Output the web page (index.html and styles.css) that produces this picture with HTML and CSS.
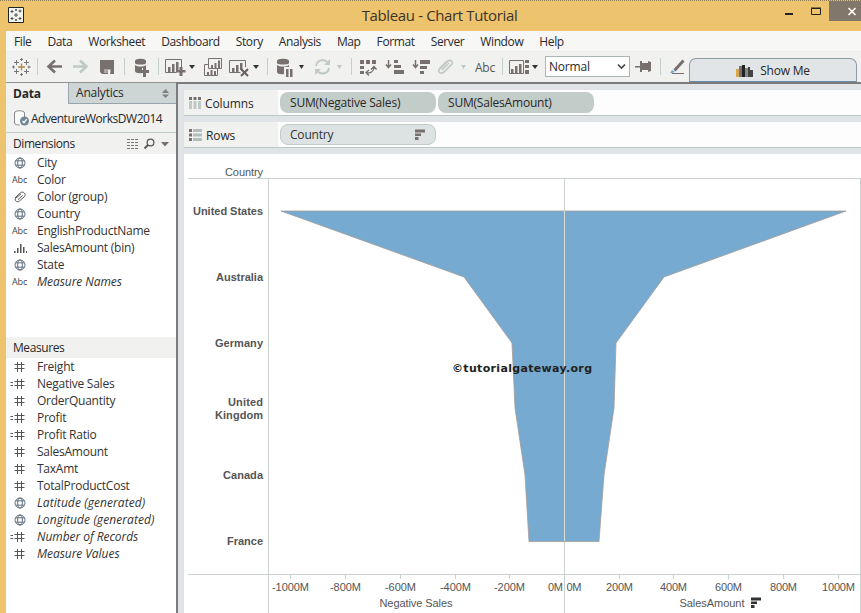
FILE: index.html
```html
<!DOCTYPE html>
<html lang="en">
<head>
<meta charset="utf-8">
<title>Tableau - Chart Tutorial</title>
<link rel="stylesheet" href="styles.css">
</head>
<body>
<svg class="defs" width="0" height="0">
  <symbol id="globe" viewBox="0 0 12 12"><g fill="none" stroke="#5f6f7e"><circle cx="6" cy="6" r="5"/><ellipse cx="6" cy="6" rx="2.3" ry="5"/><path d="M1.8 3.8h8.4M1.8 8.2h8.4"/></g></symbol>
  <symbol id="hash" viewBox="0 0 12 12"><path d="M3.500 1v10M7.500 1v10M.5 3.500h10M.5 7.500h10" fill="none" stroke="#555"/></symbol>
  <symbol id="calc" viewBox="0 0 16 12"><path d="M7.500 1v10M11.500 1v10M4.500 3.500h10M4.500 7.500h10M.5 4.500h2.500M.5 7.500h2.500" fill="none" stroke="#555"/></symbol>
  <symbol id="clip" viewBox="0 0 14 12"><path d="M2 7 7.500 1.800c2.500-2 6 1 4 3.700L6.500 10c-2.300 2-5.500-.3-3.800-2.800L8 2.800M5 8.700l4.500-4.200" fill="none" stroke="currentColor"/></symbol>
  <symbol id="sort" viewBox="0 0 12 12"><path d="M1 .5h10v3H1zM1 4.500h6v2.500H1zM1 8h3.500v3H1z" fill="currentColor"/></symbol>
</svg>
<header class="titlebar">
  <svg class="appicon" width="16" height="16"><path d="M.5.5h15v15H.5z" fill="#f2f2ee" stroke="#222"/><path d="M8 6v4M6 8h4M4 3v3M2.500 4.500h3M12 2.500v3M10.500 4h3M4 10v3M2.500 11.500h3M12 10v3M10.500 11.500h3M8 2v2M7 3h2M8 12v2M7 13h2" stroke="#333" stroke-width=".8" fill="none"/></svg>
  <h1>Tableau - Chart Tutorial</h1>
  <svg class="winbtns" width="81" height="31" viewBox="780 0 81 31"><path d="M785 14h8" stroke="#222" stroke-width="2"/><path d="M811.500 8.500h9v6h-9zM811 8h10" fill="none" stroke="#222"/><path d="M829 1h32v20h-32z" fill="#82776b"/><path d="m848.500 8 7 7m0-7-7 7" stroke="#fff" stroke-width="1.600"/></svg>
</header>
<div class="frame">
  <nav class="menu"><span>File</span><span>Data</span><span>Worksheet</span><span>Dashboard</span><span>Story</span><span>Analysis</span><span>Map</span><span>Format</span><span>Server</span><span>Window</span><span>Help</span></nav>
  <div class="toolbar">
    <svg width="30" height="32" viewBox="6 51 30 32"><g fill="none" stroke="#777"><path d="M21.500 63.500v7M18 67h7" stroke="#b08a45" stroke-width="1.300"/><path d="M16.500 60v5M14 62.500h5M26.500 60v5M24 62.500h5M16.500 69v5M14 71.500h5M26.500 69v5M24 71.500h5M21.500 58v3M20 59.500h3M21.500 73v3M20 74.500h3M13.500 65.500v3M12 67h3M29 65.500v3M27.500 67h3"/></g></svg>
    <i class="sep w3"></i>
    <svg width="29" height="32" viewBox="39 51 29 32"><path d="M62 66.500H49m6-6-6.500 6 6.500 6" fill="none" stroke="#77706f" stroke-width="2.600"/></svg>
    <svg width="26" height="32" viewBox="68 51 26 32"><path d="M73 66.500h13m-6-6 6.500 6-6.500 6" fill="none" stroke="#bfc9c6" stroke-width="2.600"/></svg>
    <svg width="28" height="32" viewBox="94 51 28 32"><path d="M100 60h14v14h-12l-2-2z" fill="#77706f"/><path d="M104 69h7v4h-7z" fill="#aaa5a3"/><path d="M108 70h2v4h-2z" fill="#f1f1f0"/></svg>
    <i class="sep w4"></i>
    <svg width="30" height="32" viewBox="126 51 30 32"><g fill="#77706f"><path d="M135 61c0-3 11-3 11 0v2c0 2-11 2-11 0zM135 65c3 2 8 2 11 0v3h-4v5c-3 .5-7 0-7-2z"/><path d="M143 67h3v3h3v3h-3v4h-3v-4h-3v-3h3z"/></g></svg>
    <i class="sep w4"></i>
    <svg width="38" height="32" viewBox="160 51 38 32"><path d="M181.500 68v-8.500h-16v13h11" fill="none" stroke="#77706f"/><path d="M168 67h2.500v5H168zM172 64h2.500v8H172zM176 62h2.500v8H176zM179.500 67h3v3h3v2.500h-3V76h-3v-3.500H176V70h3.500z" fill="#77706f"/><path d="M189 65h6l-3 4z" fill="#333"/></svg>
    <svg width="27" height="32" viewBox="198 51 27 32"><path d="M208.500 58.500h13v10h-13zM208 64.500h-3.500v11h13V69" fill="none" stroke="#77706f"/><path d="M211 65h2v3h-2zM214.500 63h2v5h-2zM218 60.500h2V68h-2zM207 72h2v3h-2zM210.500 70h2v5h-2zM214 71h2v4h-2z" fill="#77706f"/></svg>
    <svg width="39" height="32" viewBox="225 51 39 32"><path d="M245.500 67v-6.500h-16v12h11" fill="none" stroke="#77706f"/><path d="M232 68h2.500v4H232zM236 65h2.500v7H236zM240 63h2.500v7H240z" fill="#77706f"/><path d="m241 69 7 7m0-7-7 7" stroke="#665f5e" stroke-width="2"/><path d="M253 65h6l-3 4z" fill="#333"/></svg>
    <i class="sep w6"></i>
    <svg width="40" height="32" viewBox="270 51 40 32"><path d="M277 61c0-3 12-3 12 0v2c0 2-12 2-12 0zM277 65c3 2 9 2 12 0v2h-5v7c-3 .5-7 0-7-2zM286 69h2.500v8H286zM290 69h2.500v8H290z" fill="#77706f"/><path d="M299 65h5l-2.500 4z" fill="#333"/></svg>
    <svg width="38" height="32" viewBox="310 51 38 32"><path d="M316 66c1-6 8-8 12-3M329 68c-1 6-8 7-12 3" fill="none" stroke="#bfc9c6" stroke-width="2"/><path d="M330 59v6h-6zM315 75v-6h6z" fill="#bfc9c6"/><path d="M337 65h5l-2.500 4z" fill="#bfc9c6"/></svg>
    <i class="sep w6"></i>
    <svg width="27" height="32" viewBox="354 51 27 32"><path d="M360 60h4v4h-4zM366 60h4v4h-4zM372 60h4v4h-4zM360 66h4v3h-4zM360 71h4v3h-4z" fill="#77706f"/><path d="M366.500 72.500c4 1.500 7-1 7.500-5m-3 2 3-3 2.500 3M369 70l-3 2.500 3 3" fill="none" stroke="#77706f" stroke-width="1.300"/></svg>
    <svg width="27" height="32" viewBox="381 51 27 32"><path d="M388.500 60v7m-2.500-2.500 2.500 3 2.500-3" fill="none" stroke="#77706f" stroke-width="1.500"/><path d="M394 60h4v3h-4zM394 65h7v3h-7zM394 70h10v4h-10z" fill="#77706f"/></svg>
    <svg width="25" height="32" viewBox="408 51 25 32"><path d="M415.500 60v7m-2.500-2.500 2.500 3 2.500-3" fill="none" stroke="#77706f" stroke-width="1.500"/><path d="M420 60h10v4h-10zM420 66h7v3h-7zM420 71h4v3h-4z" fill="#77706f"/></svg>
    <svg width="37" height="32" viewBox="433 51 37 32"><path d="m440 69 8-8c3-2 5 1 4 3l-8 8c-4 3-7-1-4-4l7-7m-5 9 7-7" fill="none" stroke="#bfc9c6" stroke-width="1.700"/><path d="M461 65h5l-2.500 4z" fill="#bfc9c6"/></svg>
    <span class="abc">Abc</span>
    <i class="sep w4"></i>
    <svg width="41" height="32" viewBox="504 51 41 32"><path d="M509.500 60.500h14v13h-14z" fill="none" stroke="#77706f"/><path d="M511 69h2.500v4H511zM515 66h2.500v7H515zM519 64h2.500v9H519zM525 60h4v3h-4zM525 65h4v3h-4zM525 70h4v4h-4z" fill="#77706f"/><path d="M532 65h6l-3 4z" fill="#333"/></svg>
    <div class="select"><span>Normal</span><svg width="9" height="7"><path d="m1 1.500 3.500 3.500L8 1.500" fill="none" stroke="#444" stroke-width="1.600"/></svg></div>
    <svg width="27" height="32" viewBox="630 51 27 32"><path d="M635 66h6v1.500h-6zM640 61h2v11h-2zM642 63h7v7h-7zM648 61l3 1v9l-3 1z" fill="#77706f"/></svg>
    <i class="sep w7"></i>
    <svg width="25" height="32" viewBox="664 51 25 32"><path d="m683.500 60.500-9 10" stroke="#77706f" stroke-width="3"/><path d="m672 70 3 2-5 1.500z" fill="#6ca7d2"/><path d="M672 73.500h12" stroke="#77706f"/></svg>
    <div class="showme"><svg width="17" height="12"><path d="M0 4h3v8H0z" fill="#d9a650"/><path d="M3 1h3v11H3z" fill="#77706f"/><path d="M6 0h3v12H6z" fill="#222"/><path d="M9 3h3v9H9z" fill="#888"/><path d="M12 2h2v10h-2zM14 5h3v7h-3z" fill="#444"/></svg><span>Show Me</span></div>
  </div>
  <div class="body">
    <aside>
      <div class="tabs"><b>Data</b><div><span>Analytics</span><svg width="7" height="9"><path d="m0 4 3.500-4L7 4zM0 5.500h7L3.500 9z" fill="#7c8184"/></svg></div></div>
      <div class="source"><svg width="17" height="17"><path d="M11.500 7V3c0-3-10-3-10 0v10c0 1.500 3 2 5 2" fill="#fafafa" stroke="#888"/><circle cx="11.500" cy="11" r="4.500" fill="#718797"/><path d="m9.500 11 1.500 1.700 2.700-3.500" fill="none" stroke="#fff" stroke-width="1.300"/></svg><span>AdventureWorksDW2014</span></div>
      <div class="head"><span>Dimensions</span>
        <svg width="42" height="12"><path d="M0 1.500h3M0 4.500h3M0 7.500h3M0 10.500h3M4 1.500h8M4 4.500h8M4 7.500h8M4 10.500h8" stroke="#777" stroke-dasharray="3 1"/><circle cx="23.500" cy="4.500" r="3.400" fill="none" stroke="#555" stroke-width="1.200"/><path d="m21 7-3.500 3.500" stroke="#555" stroke-width="1.800"/><path d="M34 4h8l-4 4.500z" fill="#77706f"/></svg></div>
      <ul class="dims">
        <li><svg class="g"><use href="#globe"/></svg>City</li>
        <li><small>Abc</small>Color</li>
        <li><svg class="p"><use href="#clip"/></svg>Color (group)</li>
        <li><svg class="g"><use href="#globe"/></svg>Country</li>
        <li><small>Abc</small>EnglishProductName</li>
        <li><svg class="p" viewBox="0 0 14 12"><path d="M1 9h1.500v2H1zM4 6h1.500v5H4zM7 2h1.500v9H7zM10 5h1.500v6H10zM13 9h1v2h-1z" fill="#555"/></svg>SalesAmount (bin)</li>
        <li><svg class="g"><use href="#globe"/></svg>State</li>
        <li class="it"><small>Abc</small>Measure Names</li>
      </ul>
      <div class="head"><span>Measures</span></div>
      <ul>
        <li><svg class="g"><use href="#hash"/></svg>Freight</li>
        <li><svg class="c"><use href="#calc"/></svg>Negative Sales</li>
        <li><svg class="g"><use href="#hash"/></svg>OrderQuantity</li>
        <li><svg class="c"><use href="#calc"/></svg>Profit</li>
        <li><svg class="c"><use href="#calc"/></svg>Profit Ratio</li>
        <li><svg class="g"><use href="#hash"/></svg>SalesAmount</li>
        <li><svg class="g"><use href="#hash"/></svg>TaxAmt</li>
        <li><svg class="g"><use href="#hash"/></svg>TotalProductCost</li>
        <li class="it wide"><svg class="g"><use href="#globe"/></svg>Latitude (generated)</li>
        <li class="it wide"><svg class="g"><use href="#globe"/></svg>Longitude (generated)</li>
        <li class="it"><svg class="c"><use href="#calc"/></svg>Number of Records</li>
        <li class="it"><svg class="g"><use href="#hash"/></svg>Measure Values</li>
      </ul>
    </aside>
    <main>
      <section class="shelf"><div class="label"><svg width="12" height="12"><path d="M0 0h3v3H0zM4.500 0h3v3h-3zM9 0h3v3H9z" fill="#77706f"/><path d="M0 4h3v8H0zM4.500 4h3v8h-3zM9 4h3v8H9z" fill="#bfc9c6"/></svg>Columns</div><div class="pill">SUM(Negative Sales)</div><div class="pill">SUM(SalesAmount)</div></section>
      <section class="shelf"><div class="label"><svg width="13" height="12"><path d="M0 0h3v3H0zM0 4.500h3v3H0zM0 9h3v3H0z" fill="#77706f"/><path d="M4 0h9v3H4zM4 4.500h9v3H4zM4 9h9v3H4z" fill="#b3beba"/></svg>Rows</div><div class="pill light">Country<svg width="12" height="12"><use href="#sort"/></svg></div></section>
      <svg class="chart" width="677" height="459" viewBox="184 154 677 459">
        <path d="M188 178.500h673M188 574.500h673M268.500 178v435M564.500 178v435M860.500 178v435" stroke="#cbd1cf" fill="none"/>
        <path d="M290.500 575v4M345.500 575v4M400.500 575v4M455.500 575v4M509.500 575v4M619.500 575v4M673.500 575v4M728.500 575v4M783.500 575v4M838.500 575v4" stroke="#cbd1cf"/>
        <path d="M281 211H846L664 277 616 343 614 408 604 475 599 541.500H529L525 475 515 408 512 343 464 277Z" fill="#76aad0" stroke="#a49c98" stroke-width=".8"/>
        <path d="M564.500 211v330" stroke="#d9dcd3"/>
        <g class="rowlabels">
          <text class="title" x="263" y="176" textLength="38">Country</text>
          <text x="263" y="215" textLength="70">United States</text>
          <text x="263" y="281" textLength="47">Australia</text>
          <text x="263" y="347" textLength="48">Germany</text>
          <text x="263" y="406" textLength="35">United</text>
          <text x="263" y="419" textLength="48">Kingdom</text>
          <text x="263" y="479" textLength="40">Canada</text>
          <text x="263" y="545" textLength="36">France</text>
        </g>
        <g class="axis">
          <text x="290.500" y="591" textLength="37">-1000M</text><text x="345.500" y="591" textLength="31">-800M</text><text x="400.500" y="591" textLength="31">-600M</text><text x="455.500" y="591" textLength="31">-400M</text><text x="509.500" y="591" textLength="31">-200M</text>
          <text x="555.500" y="591" textLength="15">0M</text><text x="574" y="591" textLength="15">0M</text>
          <text x="619.500" y="591" textLength="27">200M</text><text x="673.500" y="591" textLength="27">400M</text><text x="728.500" y="591" textLength="27">600M</text><text x="783.500" y="591" textLength="27">800M</text><text x="838.500" y="591" textLength="33">1000M</text>
          <text x="416" y="607" textLength="73">Negative Sales</text><text x="712" y="607" textLength="65">SalesAmount</text>
        </g>
        <use href="#sort" x="750" y="597" width="12" height="12" color="#333"/>
        <text class="mark" x="452" y="372" textLength="140">©tutorialgateway.org</text>
      </svg>
    </main>
  </div>
</div>
</body>
</html>
```
FILE: styles.css
```css
* { box-sizing: border-box; }
body { margin: 0; width: 861px; height: 613px; overflow: hidden; background: #edc46d; font: 12px "Open Sans", "Noto Sans", sans-serif; color: #282828; letter-spacing: -.2px; }
svg { flex: none; display: block; }
.defs { position: absolute; }
.titlebar { height: 31px; display: flex; align-items: flex-start; border-top: 1px dotted #8f7e59; padding-left: 8px; }
.appicon { margin-top: 6px; }
h1 { flex: 1; margin: 3px 0 0; padding-left: 75px; text-align: center; font-size: 15px; line-height: 22px; font-weight: 400; color: #3c3329; letter-spacing: -.36px; }
.winbtns { margin-top: -1px; }
.frame { margin-left: 6px; height: 582px; background: #f1f1f0; display: flex; flex-direction: column; }
.menu { height: 20px; display: flex; gap: 16px; padding: 2px 0 0 8px; line-height: 18px; background: #f7f7f6; letter-spacing: -.38px; }
.toolbar { height: 31px; display: flex; border-top: 1px solid #ececeb; }
.toolbar > svg { margin-top: -1px; }
.sep { flex: none; height: 17px; margin-top: 6px; background: linear-gradient(#c5cfcb, #c5cfcb) center / 1px 100% no-repeat; }
.w3 { width: 3px; } .w4 { width: 4px; } .w6 { width: 6px; } .w7 { width: 7px; }
.abc { width: 30px; text-align: center; line-height: 31px; color: #555; }
.select { width: 85px; height: 21px; margin-top: 4px; border: 1px solid #a9b8b5; background: #fff; display: flex; align-items: center; justify-content: space-between; padding: 0 3px; }
.showme { width: 168px; height: 24px; margin-top: 6px; border: 1px solid #8c9ba3; border-bottom-color: #678ca7; border-radius: 7px 7px 0 0; background: #e1e5e7; display: flex; align-items: center; justify-content: center; gap: 7px; padding-top: 1px; }
.body { flex: 1; display: flex; min-height: 0; }
aside { width: 170px; background: #fff; border-top: 1px solid #929292; display: flex; flex-direction: column; }
.tabs { height: 21px; display: flex; background: #f1f1f0; line-height: 20px; }
.tabs b { width: 62px; padding-left: 7px; line-height: 21px; }
.tabs div { flex: 1; display: flex; justify-content: space-between; align-items: center; padding: 0 7px; background: #cdd6d5; border-left: 1px solid #98a5ad; border-bottom: 1px solid #98a5ad; }
.source { height: 29px; display: flex; align-items: center; padding-left: 7px; background: #f1f1f0; border-bottom: 1px solid #c2ccc8; letter-spacing: -.48px; }
.source span { margin-left: 1px; }
.head { height: 21px; flex: none; display: flex; align-items: center; justify-content: space-between; padding: 0 7px; background: #f1f1ef; letter-spacing: -.42px; }
ul { list-style: none; margin: 0; padding: 0; }
.dims { height: 183px; }
li { height: 17px; display: flex; align-items: center; line-height: 17px; color: #333; letter-spacing: -.25px; }
.it { font-style: italic; letter-spacing: -.05px; }
.wide { letter-spacing: .08px; }
.g { width: 12px; height: 12px; margin: 0 11px 0 8px; }
.p { width: 14px; height: 12px; margin: 0 10px 0 7px; color: #555; }
.c { width: 16px; height: 12px; margin: 0 11px 0 4px; }
small { width: 25px; margin-left: 6px; font-size: 9px; font-style: normal; color: #444; letter-spacing: -.1px; }
main { flex: 1; background: #e1e4e7; border-left: 2px solid #7b7b7d; border-top: 2px solid #7b7b7d; padding: 6px 0 0 6px; overflow: hidden; }
.shelf { height: 26px; margin-bottom: 6px; display: flex; background: #fdfdfd; border-bottom: 1px solid #bcc7c4; }
.label { width: 94px; margin-right: 2px; padding: 1px 0 0 5px; display: flex; align-items: center; gap: 4px; background: #f1f1ef; letter-spacing: -.1px; }
.pill { width: 156px; height: 21px; margin: 2px 2px 0 0; padding: 0 10px; border-radius: 8px; background: #c2ccc8; display: flex; align-items: center; justify-content: space-between; }
.light { background: #dde2e3; border: 1px solid #c2ccc8; color: #333; padding: 0 9px; }
.light svg { color: #77706f; }
.chart { background: #fff; letter-spacing: 0; font: 11px "Liberation Sans", sans-serif; fill: #555; }
.rowlabels text { text-anchor: end; font-weight: 700; }
.rowlabels .title { font-weight: 400; }
.axis text { text-anchor: middle; }
.mark { font: bold 11px "DejaVu Sans", sans-serif; fill: #222; }
```
